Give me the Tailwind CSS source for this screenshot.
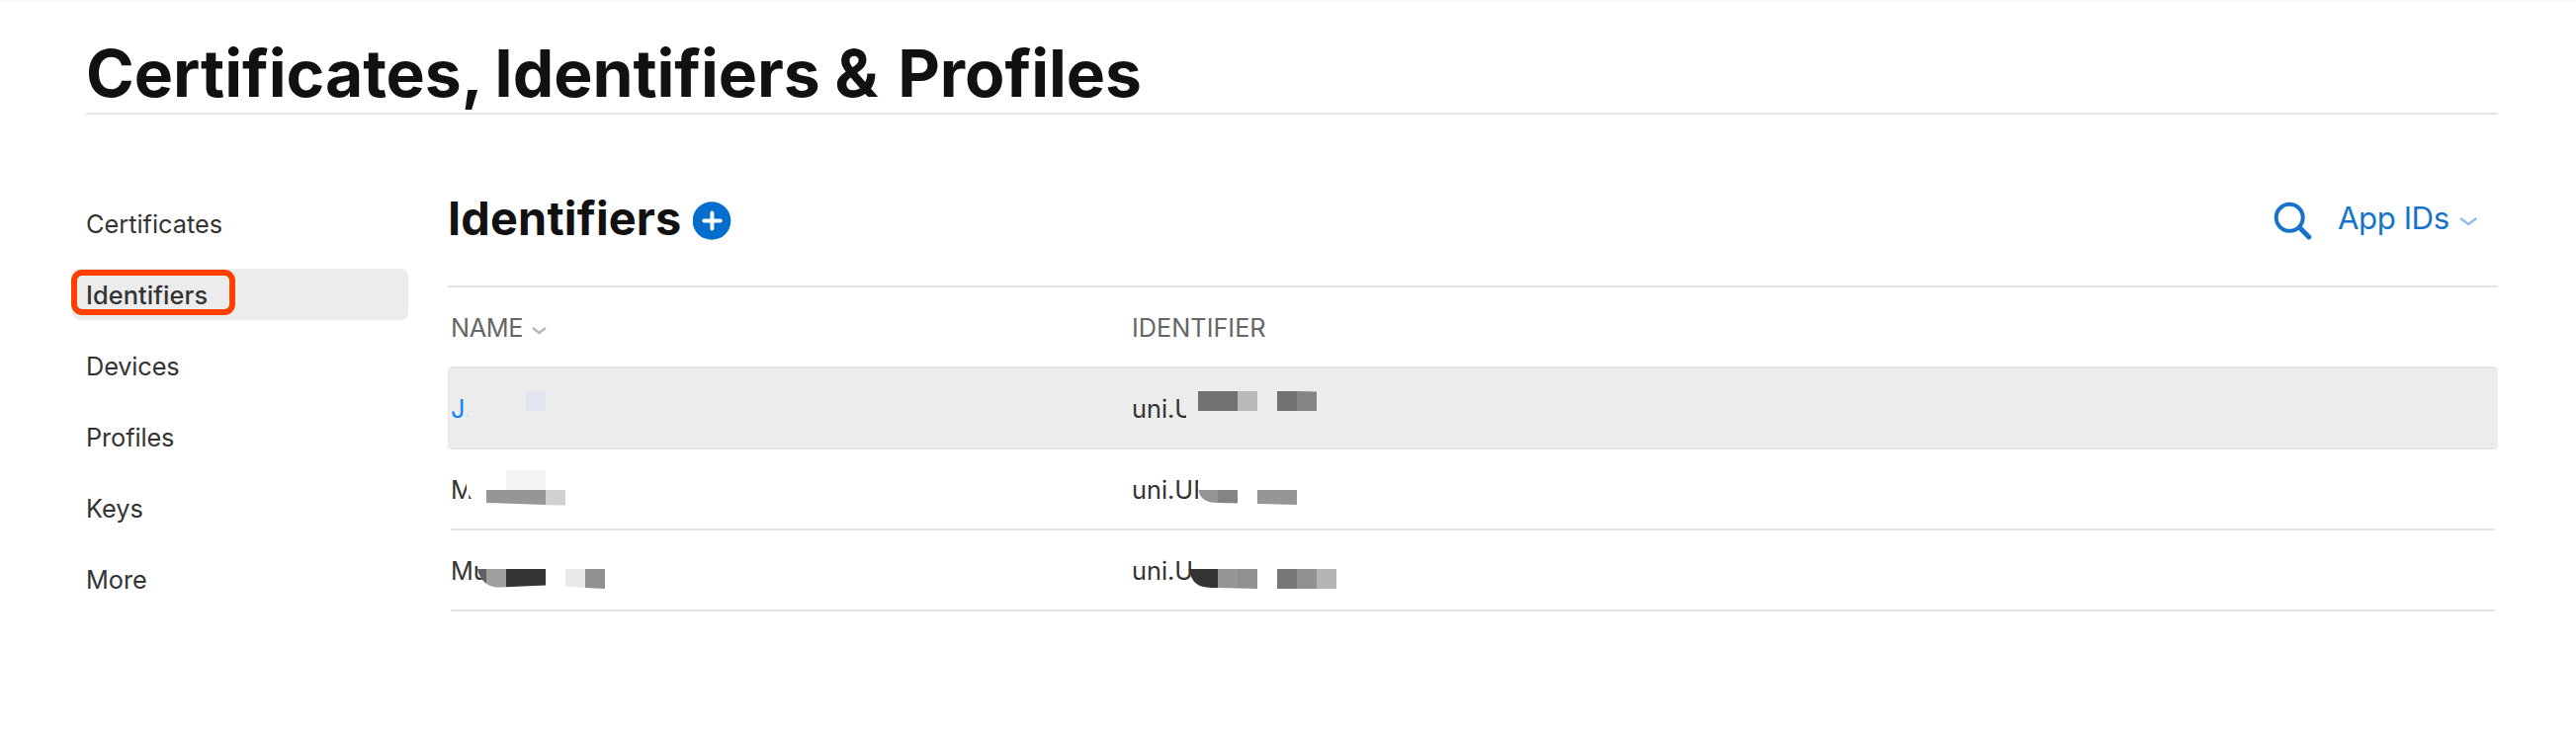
<!DOCTYPE html>
<html lang="en">
<head>
<meta charset="utf-8">
<title>Certificates, Identifiers &amp; Profiles</title>
<script src="https://cdn.jsdelivr.net/npm/@tailwindcss/browser@4"></script>
</head>
<body class="bg-white font-['Inter',sans-serif] text-[#333] text-[25.3px] leading-[40px] h-[740px] overflow-hidden">
<div class="h-[740px] border-t-2 border-[#f8f8f8] pl-[87px] pr-[79px]">
  <header class="pt-8 border-b-2 border-[#e4e4e4]">
    <h1 class="text-[66px] leading-[80px] font-bold text-[#111] tracking-[-0.08px]">Certificates, <span class="-ml-[2px]">Identifiers</span> <span class="-ml-[1px] mr-[4px]">&amp;</span> Profiles</h1>
  </header>
  <div class="flex">
    <nav class="w-[340px] -ml-[14px] mt-[84px] flex flex-col gap-5 shrink-0">
      <a class="h-[52px] pl-[14px] pt-[7px]">Certificates</a>
      <a class="relative h-[52px] pl-[14px] pt-[7px] rounded-lg bg-[#ececec] font-medium tracking-[0.12px]">Identifiers
        <i class="absolute -left-px top-px w-[166px] h-[46px] rounded-[11px] border-6 border-[#ff4000]"></i></a>
      <a class="h-[52px] pl-[14px] pt-[7px] tracking-[-0.12px]">Devices</a>
      <a class="h-[52px] pl-[14px] pt-[7px] tracking-[-0.1px]">Profiles</a>
      <a class="h-[52px] pl-[14px] pt-[7px]">Keys</a>
      <a class="h-[52px] pl-[14px] pt-[7px]">More</a>
    </nav>
    <main class="ml-10 grow">
      <div class="h-[175px] pt-[75px] flex items-start border-b-2 border-[#e4e4e4]">
        <h2 class="text-[46.8px] leading-[60px] font-bold text-[#111] w-[248px] whitespace-nowrap tracking-[0.2px]">Identifiers</h2>
        <svg class="w-[39px] h-[39px] mt-[13px]" viewBox="0 0 39 39"><circle cx="19" cy="19.500" r="19.300" fill="#036ecd"/><path d="M11.300 19.500h16.400M19.400 11.500v16" stroke="#fff" stroke-width="4" stroke-linecap="round"/></svg>
        <svg class="ml-auto w-10 h-10 mt-[12px]" viewBox="0 0 40 40" fill="none" stroke="#1672cb"><circle cx="16.200" cy="17.300" r="13.500" stroke-width="4"/><path d="M26.500 27.500l9.300 9.500" stroke-width="5" stroke-linecap="round"/></svg>
        <span class="ml-[25px] text-[31.2px] leading-[60px] text-[#1672cb] w-[123px] whitespace-nowrap tracking-[-0.45px]">App IDs</span>
        <svg class="mt-[27px] mr-[21px] w-[18px] h-3" viewBox="0 0 18 12" fill="none" stroke="#93bbe8" stroke-width="2.500"><path d="M1.200 3l8 6 8-6"/></svg>
      </div>
      <div class="mx-[3px] isolate">
        <div class="h-[82px] flex border-b-2 border-[#e4e4e4] text-[#666] pt-[21px]">
          <div class="w-[689px] flex"><span class="tracking-[-0.4px] w-[74px]">NAME</span><svg class="ml-[8px] mt-[18px] w-[15px] h-[10px]" viewBox="0 0 15 10" fill="none" stroke="#b5b5b5" stroke-width="2.400"><path d="M1 2l6.500 5 6.500-5"/></svg></div>
          <span>IDENTIFIER</span>
        </div>
        <!-- Each redaction mosaic is laid over the text that it partly hides -->
        <div class="relative h-[82px] flex border-b-2 border-[#e4e4e4] pt-[21px]">
          <div class="absolute -inset-x-[3px] -inset-y-px bg-[#ececec] -z-10"></div>
          <div class="w-[689px] text-[#0a84ff]">J</div><div>uni.U</div>
          <svg class="absolute left-0 top-0 w-[960px] h-20" viewBox="456 373 960 80">
            <path d="M472.300 420l1.200 2" stroke="#b5d3f2"/>
            <path fill="#e0e5ef" d="M532 396h20v20h-20z"/>
            <path fill="#ececec" d="M1192.500 400l2 16 5.500 4v6h12v-26z"/>
            <path fill="#717171" d="M1212 396h40v20h-40zM1292 396h20v20h-20z"/>
            <path fill="#bababa" d="M1252 396h20v20h-20z"/>
            <path fill="#848484" d="M1312 396l20 .5v19.500h-20z"/>
          </svg>
        </div>
        <div class="relative h-[82px] flex border-b-2 border-[#e4e4e4] pt-[21px]">
          <div class="w-[689px]">M</div><div>uni.UN</div>
          <svg class="absolute left-0 top-0 w-[960px] h-20" viewBox="456 455 960 80">
            <path fill="#fff" d="M472 480h10v30h-5v-5l-3-5v6h-2z"/>
            <path fill="#f3f3f3" d="M512 476h40v20h-40z"/>
            <path fill="#969696" d="M492 496h60v15l-60-2z"/>
            <path fill="#d0d0d0" d="M552 496h20v15.500l-20-.3z"/>
            <path fill="#fff" d="M1212 480h24v32h-24z"/>
            <path fill="#969696" d="M1212.500 496H1232v13c-10 0-18-3-19.500-13zM1272 496h40v15l-40-1z"/>
            <path fill="#848484" d="M1232 496h20v13.500l-20-.5z"/>
          </svg>
        </div>
        <div class="relative h-[82px] flex border-b-2 border-[#e4e4e4] pt-[21px]">
          <div class="w-[689px]">Mu</div><div>uni.U</div>
          <svg class="absolute left-0 top-0 w-[960px] h-20" viewBox="456 537 960 80">
            <path fill="#fff" d="M483 566h16v24h-10z"/>
            <path fill="#616161" d="M483 576h9v15c-5-4-8-9-9-15z"/>
            <path fill="#9e9e9e" d="M492 576h20v18.300c-9 .5-14 .7-20-3.600z"/>
            <path fill="#333" d="M512 576h40v16.500l-40 1.800z"/>
            <path fill="#e9e9e9" d="M572 576h20v19l-20-1.500z"/>
            <path fill="#919191" d="M592 576h20v20l-20-1z"/>
            <path fill="#333" d="M1202.500 576H1232v19h-6c-15-.5-20-5-23.500-19z"/>
            <path fill="#969696" d="M1232 576h20v19.500l-20-.5z"/>
            <path fill="#909090" d="M1252 576h20v20l-20-.5zM1312 576h20v20h-20z"/>
            <path fill="#767676" d="M1292 576h20v20h-20z"/>
            <path fill="#b5b5b5" d="M1332 576h20v20h-20z"/>
          </svg>
        </div>
      </div>
    </main>
  </div>
</div>
</body>
</html>
